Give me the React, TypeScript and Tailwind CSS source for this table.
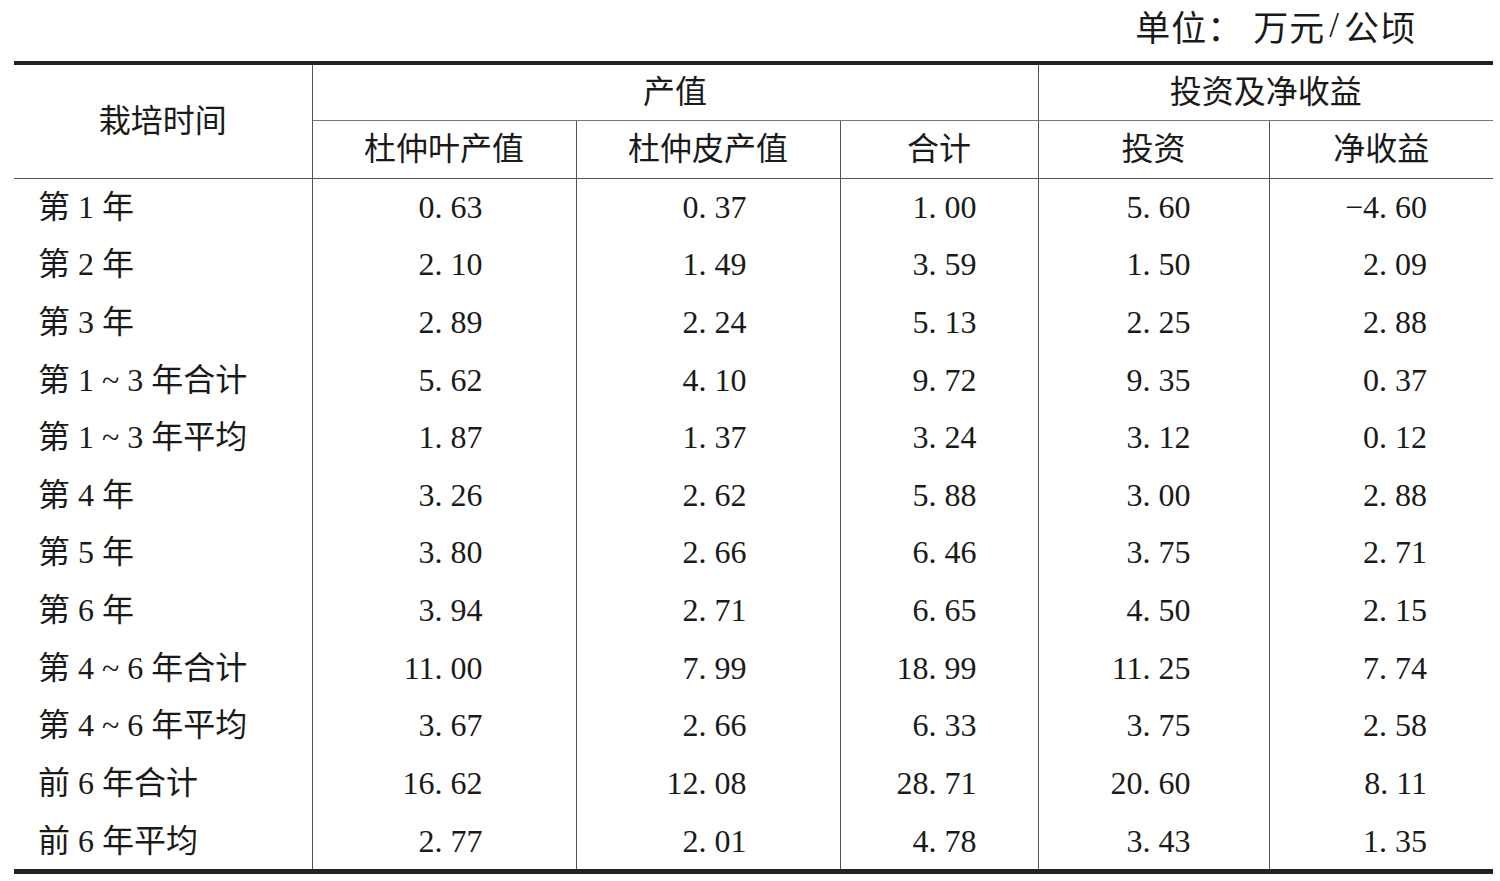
import React from "react";

const rows: string[][] = [
  ["第 1 年", "0. 63", "0. 37", "1. 00", "5. 60", "−4. 60"],
  ["第 2 年", "2. 10", "1. 49", "3. 59", "1. 50", "2. 09"],
  ["第 3 年", "2. 89", "2. 24", "5. 13", "2. 25", "2. 88"],
  ["第 1 ~ 3 年合计", "5. 62", "4. 10", "9. 72", "9. 35", "0. 37"],
  ["第 1 ~ 3 年平均", "1. 87", "1. 37", "3. 24", "3. 12", "0. 12"],
  ["第 4 年", "3. 26", "2. 62", "5. 88", "3. 00", "2. 88"],
  ["第 5 年", "3. 80", "2. 66", "6. 46", "3. 75", "2. 71"],
  ["第 6 年", "3. 94", "2. 71", "6. 65", "4. 50", "2. 15"],
  ["第 4 ~ 6 年合计", "11. 00", "7. 99", "18. 99", "11. 25", "7. 74"],
  ["第 4 ~ 6 年平均", "3. 67", "2. 66", "6. 33", "3. 75", "2. 58"],
  ["前 6 年合计", "16. 62", "12. 08", "28. 71", "20. 60", "8. 11"],
  ["前 6 年平均", "2. 77", "2. 01", "4. 78", "3. 43", "1. 35"],
];

const padR = ["pr-[93px]", "pr-[93px]", "pr-[61px]", "pr-[78px]", "pr-[66px]"];

export default function App() {
  return (
    <div
      className="w-[1500px] h-[881px] bg-white text-[#1a1a1a] overflow-hidden"
      style={{ fontFamily: '"Liberation Serif", "Noto Sans CJK SC", serif' }}
    >
      <div
        className="h-[61px] flex items-start justify-end pr-[84px] pt-[4px] text-[35px] leading-[44px] tracking-[1px]"
        style={{ fontFamily: '"Noto Sans CJK SC", sans-serif' }}
      >
        <span>单位：</span>
        <span className="ml-[10px]">万元</span>
        <span className="mx-[4px]" style={{ fontFamily: '"Liberation Serif", serif' }}>
          /
        </span>
        <span>公顷</span>
      </div>
      <table className="ml-[14px] w-[1479px] table-fixed border-collapse text-[32px] leading-none">
        <colgroup>
          <col className="w-[298px]" />
          <col className="w-[264px]" />
          <col className="w-[264px]" />
          <col className="w-[198px]" />
          <col className="w-[231px]" />
          <col className="w-[224px]" />
        </colgroup>
        <thead>
          <tr className="h-[57px]">
            <th
              rowSpan={2}
              className="font-normal text-center align-middle border-t-[4px] border-t-[#222] border-b border-b-[#555] border-r border-r-[#555]"
            >
              栽培时间
            </th>
            <th
              colSpan={3}
              className="font-normal text-center align-middle border-t-[4px] border-t-[#222] border-r border-r-[#555] border-b border-b-[#777]"
            >
              产值
            </th>
            <th
              colSpan={2}
              className="font-normal text-center align-middle border-t-[4px] border-t-[#222] border-b border-b-[#777]"
            >
              投资及净收益
            </th>
          </tr>
          <tr className="h-[58px]">
            <th className="font-normal text-center align-middle border-r border-r-[#555] border-b border-b-[#555]">杜仲叶产值</th>
            <th className="font-normal text-center align-middle border-r border-r-[#555] border-b border-b-[#555]">杜仲皮产值</th>
            <th className="font-normal text-center align-middle border-r border-r-[#555] border-b border-b-[#555]">合计</th>
            <th className="font-normal text-center align-middle border-r border-r-[#555] border-b border-b-[#555]">投资</th>
            <th className="font-normal text-center align-middle border-b border-b-[#555]">净收益</th>
          </tr>
        </thead>
        <tbody>
          {rows.map((r, i) => {
            const last = i === rows.length - 1;
            return (
              <tr key={i} className={last ? "h-[60px]" : "h-[57.6px]"}>
                <td
                  className={
                    "text-left pl-[24px] whitespace-pre border-r border-r-[#555]" +
                    (last ? " align-top pt-[13px] border-b-[5px] border-b-[#222]" : " align-middle")
                  }
                >
                  {r[0]}
                </td>
                {r.slice(1).map((v, j) => (
                  <td
                    key={j}
                    className={
                      "text-right whitespace-pre " +
                      padR[j] +
                      (j < 4 ? " border-r border-r-[#555]" : "") +
                      (last ? " align-top pt-[13px] border-b-[5px] border-b-[#222]" : " align-middle")
                    }
                  >
                    {v}
                  </td>
                ))}
              </tr>
            );
          })}
        </tbody>
      </table>
    </div>
  );
}
